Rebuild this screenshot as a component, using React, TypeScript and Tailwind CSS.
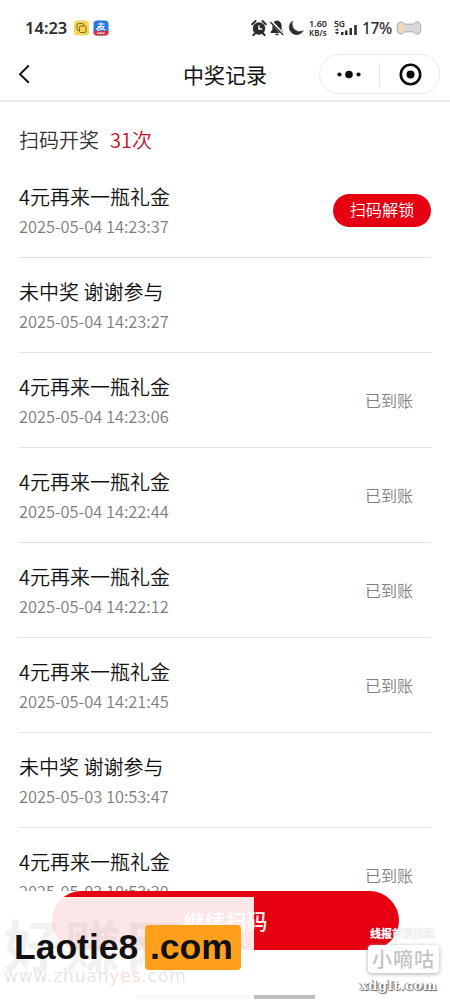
import React from "react";

type RecordItem = { title: string; time: string; state?: "unlock" | "paid" };

const records: RecordItem[] = [
  { title: "4元再来一瓶礼金", time: "2025-05-04 14:23:37", state: "unlock" },
  { title: "未中奖 谢谢参与", time: "2025-05-04 14:23:27" },
  { title: "4元再来一瓶礼金", time: "2025-05-04 14:23:06", state: "paid" },
  { title: "4元再来一瓶礼金", time: "2025-05-04 14:22:44", state: "paid" },
  { title: "4元再来一瓶礼金", time: "2025-05-04 14:22:12", state: "paid" },
  { title: "4元再来一瓶礼金", time: "2025-05-04 14:21:45", state: "paid" },
  { title: "未中奖 谢谢参与", time: "2025-05-03 10:53:47" },
  { title: "4元再来一瓶礼金", time: "2025-05-03 10:53:30", state: "paid" },
];

function StatusIcons() {
  return (
    <svg className="absolute left-[250px] top-[18px]" width="54" height="20" viewBox="0 0 54 20" fill="#2d2d2d">
      <circle cx="9" cy="10.5" r="6.2" />
      <path d="M2.2 6.2 5.5 3M15.8 6.2 12.5 3M4.800 15.500 3.400 17.200M13.200 15.500l1.400 1.700" stroke="#2d2d2d" strokeWidth="2" strokeLinecap="round" />
      <path d="M9 7.2v3.8h3.2" fill="none" stroke="#fff" strokeWidth="1.4" />
      <path d="M27 2.500c-3.300.4-4.600 2.800-4.600 5.500v3.500L20.600 14v1h12.800v-1l-1.800-2.500V8c0-2.700-1.300-5.100-4.600-5.500z" />
      <path d="M25 15.800h4a2 1.500 0 0 1-4 0z" />
      <path d="m20.700 3.300 13 13.400" stroke="#fff" strokeWidth="3" />
      <path d="m20.300 4 13 13" stroke="#2d2d2d" strokeWidth="1.300" />
      <path d="M42.500 3a7.500 7.500 0 1 0 10.800 9.800C47 15.500 40.500 10.500 42.500 3z" stroke="#2d2d2d" strokeWidth=".6" />
    </svg>
  );
}

function StatusBar() {
  return (
    <div className="relative h-[52px] shrink-0 text-[#2d2d2d]">
      <span className="absolute left-[25px] top-[18px] font-['Noto_Sans',sans-serif] text-[16.5px] leading-5 font-semibold">14:23</span>
      <svg className="absolute left-[74px] top-[20px]" width="36" height="16" viewBox="0 0 36 16">
        <rect x="0" y="0.500" width="15" height="15" rx="3.500" fill="#f5d556" />
        <rect x="3" y="3.500" width="7" height="7" rx="1.500" fill="none" stroke="#80651e" />
        <rect x="5.500" y="6" width="6.500" height="6.500" rx="1.200" fill="#f5d556" stroke="#80651e" />
        <rect x="19.500" y="0.500" width="15" height="15" rx="3.500" fill="#2678dc" />
        <path d="M19.500 11h15v1a3.500 3.500 0 0 1-3.500 3.500h-8a3.500 3.500 0 0 1-3.500-3.500z" fill="#d7333f" />
        <path d="M24 4h6.500M27 2.300v4M24 6.500h6c-1 2.500-4 4-6 3.500-2.300-.6-.5-3 2-2.200l5.500 2.200" fill="none" stroke="#fff" strokeWidth="1.100" />
        <path d="M23.500 13.200h7" stroke="#fff" strokeWidth="1.200" strokeDasharray="2 .5" />
      </svg>
      <StatusIcons />
      <div className="absolute left-[309px] top-[20px] flex flex-col font-['Noto_Sans',sans-serif] font-semibold">
        <span className="text-[9px] leading-[8px]">1.60</span>
        <span className="text-[8px] leading-[9px]">KB/s</span>
      </div>
      <span className="absolute left-[334px] top-[19px] font-['Noto_Sans',sans-serif] text-[8.500px] leading-[9px] font-semibold">5G</span>
      <svg className="absolute left-[334px] top-[24px]" width="24" height="12" viewBox="0 0 24 12" fill="#2d2d2d">
        <path d="M.8 6.500 3 4.500l2.200 2zM.8 8 3 10.500 5.200 8zM7 8h2.500v3H7zM11 6.500h2.500V11H11zM15.500 4H18v7h-2.500zM20.200 1h2.600v10h-2.600z" />
      </svg>
      <span className="absolute left-[362px] top-[18px] font-['Noto_Sans',sans-serif] text-[15.500px] leading-5 font-medium tracking-[-0.400px]">17%</span>
      <svg className="absolute left-[396px] top-[21px]" width="26" height="14" viewBox="0 0 26 14">
        <path d="M5 1c2 0 3 1 3.500 2.200h9C18 2 19 1 21 1c3 0 4.500 3 3.500 6 1 3-.5 6-3.500 6-2 0-3-1-3.500-2.200h-9C8 12 7 13 5 13c-3 0-4.500-3-3.500-6C.5 4 2 1 5 1z" fill="#d9d9dd" stroke="#aaa8aa" />
        <path d="M5 2c2 0 2.700 1 3 2v6c-.3 1-1 2-3 2-2.500 0-3-3-2.500-5C2 5 2.500 2 5 2z" fill="#f0d8be" />
      </svg>
    </div>
  );
}

function NavBar() {
  return (
    <header className="relative flex h-[50px] shrink-0 items-center justify-between border-b-2 border-[#ededed] pl-[18px] pr-[10px] pb-[4px]">
      <svg width="13" height="20" viewBox="0 0 13 20" fill="none" stroke="#111" strokeWidth="1.900">
        <path d="M10.800 1.500 2 10.200l8.800 8.600" />
      </svg>
      <h1 className="absolute left-[183px] top-[7px] text-[21px] leading-[30px] font-normal text-[#111]">中奖记录</h1>
      <div className="flex h-[40px] w-[121px] items-center rounded-full border border-[#ebebeb]">
        <svg width="119" height="38" viewBox="0 0 119 38" fill="#0b0b0b">
          <circle cx="19.500" cy="19.500" r="2.100" />
          <circle cx="29" cy="19.500" r="3.800" />
          <circle cx="38.500" cy="19.500" r="2.100" />
          <path d="M59.500 7.500v25" stroke="#e5e5e5" />
          <circle cx="90.500" cy="19.500" r="9.700" fill="none" stroke="#0b0b0b" strokeWidth="2.600" />
          <circle cx="90.500" cy="19.500" r="4" />
        </svg>
      </div>
    </header>
  );
}

function RecordRow({ item }: { item: RecordItem }) {
  return (
    <li className="flex h-[95px] shrink-0 justify-between border-b border-[#e2e2e2]">
      <div className="flex flex-col pt-[19px]">
        <span className="text-[20px] leading-[30px] font-[350] text-[#111]">{item.title}</span>
        <span className="mt-[2px] text-[16.400px] leading-[24px] font-[350] text-[#7c7c7c]">{item.time}</span>
      </div>
      {item.state === "unlock" && (
        <button className="mt-[31px] h-[33px] w-[98px] rounded-full bg-[#e60012] pb-[2px] text-[16.200px] leading-[31px] font-[350] text-white">扫码解锁</button>
      )}
      {item.state === "paid" && <span className="mt-[35px] mr-[18px] text-[16px] leading-[24px] font-[350] text-[#808080]">已到账</span>}
    </li>
  );
}

export default function App() {
  return (
    <main className="relative flex h-[1000px] w-[450px] flex-col overflow-hidden bg-white font-['Noto_Sans_CJK_SC',sans-serif]">
      <StatusBar />
      <NavBar />
      <section className="flex h-[789px] shrink-0 flex-col overflow-hidden px-[19px]">
        <div className="flex h-[61px] shrink-0 gap-[11px] pt-[23px] text-[20px] leading-[30px] font-[350] text-[#333]">
          <span>扫码开奖</span>
          <span className="text-[#c8102a]">31次</span>
        </div>
        <ul className="flex flex-col">
          {records.map((item) => (
            <RecordRow key={item.time} item={item} />
          ))}
        </ul>
      </section>
      <button className="ml-[52px] h-[59px] w-[347px] shrink-0 rounded-full bg-[#e60012] text-[21px] leading-[59px] font-medium text-white">继续扫码</button>
      <div className="absolute left-[136px] top-[995px] h-[4px] w-[179px] bg-[#bebebe]" />

      <div className="absolute left-0 top-[897px] h-[103px] w-[254px] bg-white/90" />
      <span className="absolute left-[4px] top-[915px] whitespace-nowrap text-[56px] leading-[56px] font-bold tracking-[5px] text-[#888]/12">好赚网</span>
      <span className="absolute left-[4px] top-[966px] whitespace-nowrap font-['DejaVu_Sans',sans-serif] text-[17px] leading-[20px] tracking-[0.900px] text-[#777]/20">
        www.zhuan<span className="text-[#f18a60]/30">yes</span>.com
      </span>
      <div className="absolute left-[14px] top-[925px] flex h-[45px] items-center gap-[5px] font-['Liberation_Sans',sans-serif] text-[35.500px] font-bold text-[#111]">
        <span className="w-[126px]">Laotie8</span>
        <span className="-mt-px flex h-[45px] w-[96px] items-center rounded-[4px] bg-[#ff9f1b] pt-[2px] pl-[5px]">.com</span>
      </div>

      <span className="absolute left-[370px] top-[926px] whitespace-nowrap text-[11px] leading-[14px] font-bold text-white [text-shadow:0_0_1px_#aaa]">线报首发社区</span>
      <div className="absolute left-[368px] top-[945px] flex h-[28px] w-[71px] items-center justify-center rounded-[4px] bg-white text-[20px] font-medium tracking-[1px] text-[#c4c4c4] shadow-[0_1px_4px_#aaa]">小嘀咕</div>
      <span className="absolute left-[360px] top-[976px] whitespace-nowrap font-['DejaVu_Serif',serif] text-[13px] leading-[20px] font-bold tracking-[0.600px] text-white [text-shadow:1px_1px_1px_#555,-1px_0_1px_#777]">xdglt.com</span>
    </main>
  );
}
